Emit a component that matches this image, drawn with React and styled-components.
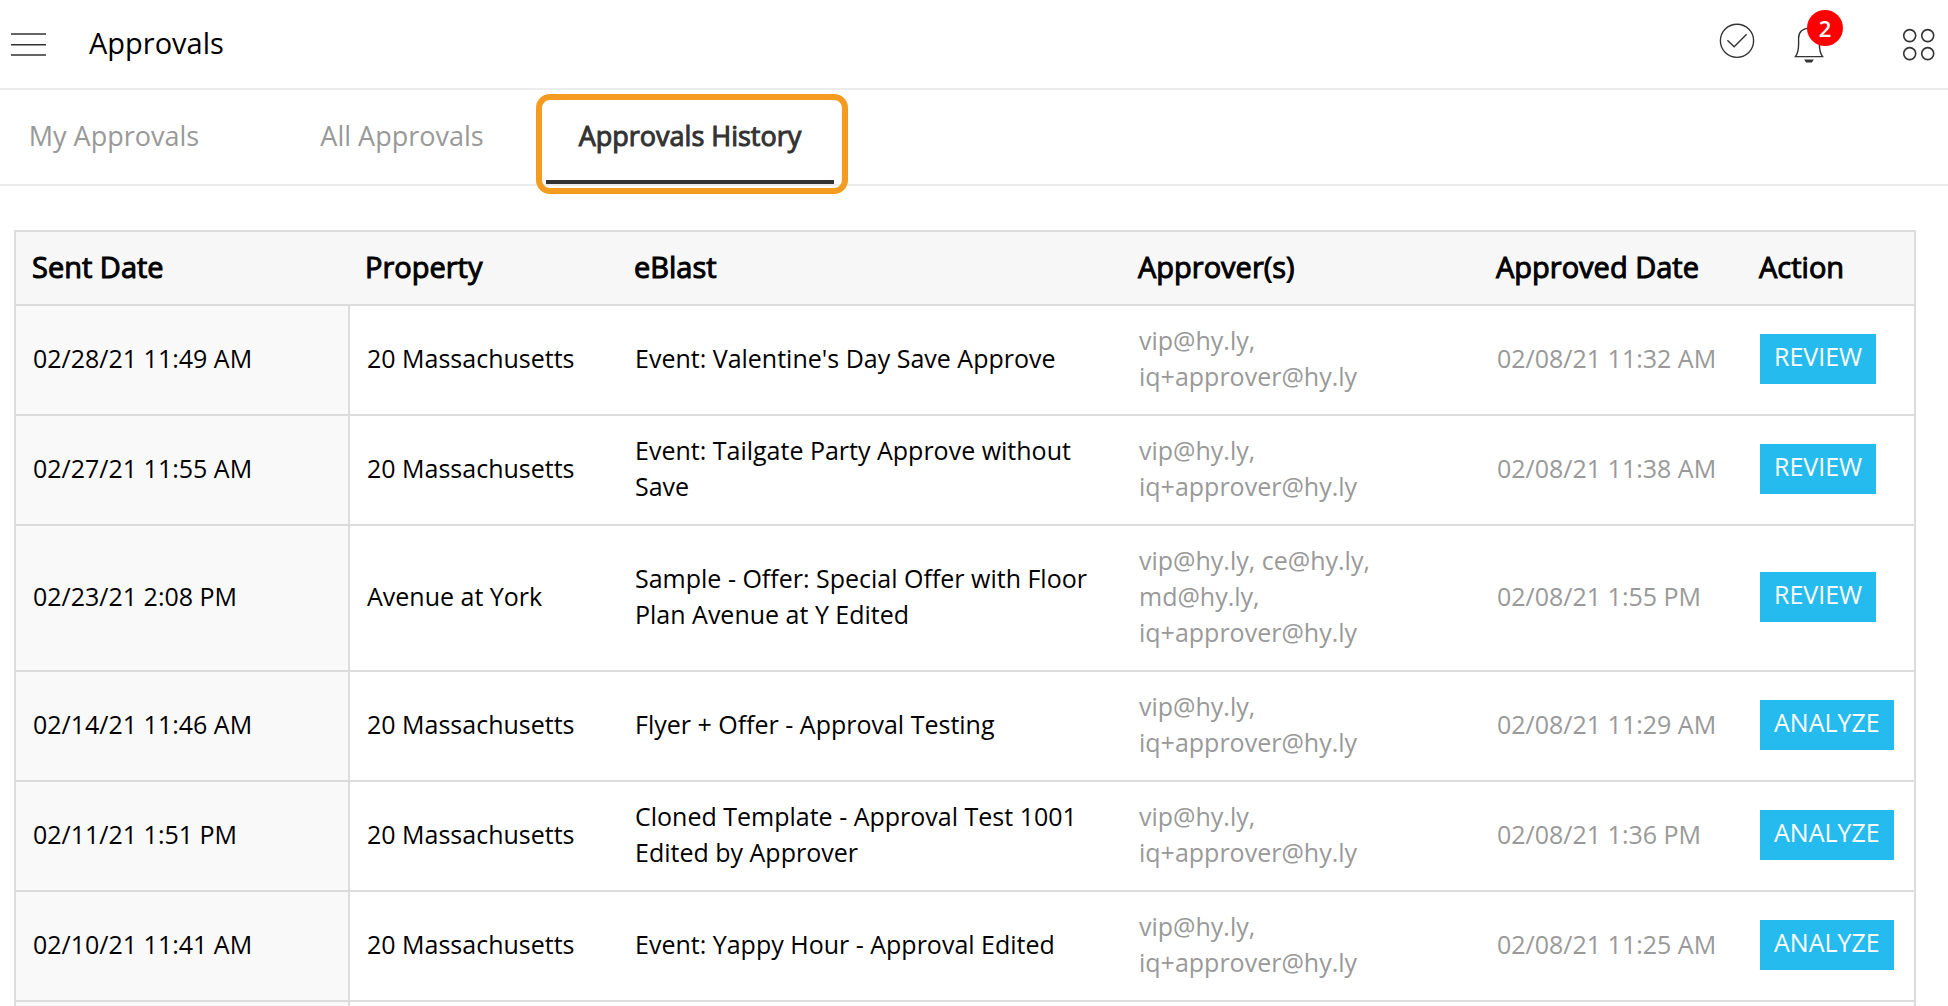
import React from "react";
import styled, { createGlobalStyle } from "styled-components";

const GlobalStyle = createGlobalStyle`
  *, *::before, *::after { box-sizing: border-box; }
  body {
    margin: 0;
    background: #fff;
    color: #000;
    font-family: "Open Sans", "Noto Sans", sans-serif;
    font-size: 25px;
    line-height: 36px;
    overflow: hidden;
  }
  button { font: inherit; color: inherit; border: 0; margin: 0; padding: 0; background: none; cursor: pointer; }
`;

const TopBar = styled.header`
  display: flex;
  align-items: center;
  height: 90px;
  padding: 0 13px 0 11px;
  border-bottom: 2px solid #ececec;
`;

const Title = styled.h1`
  margin: 0 auto 0 43px;
  padding-bottom: 2px;
  font-size: 29px;
  font-weight: 400;
`;

const IconButton = styled.button`
  position: relative;
  display: flex;
  color: #333;
  margin-left: ${(p) => p.$gap || 0}px;

  svg { display: block; fill: none; stroke: currentColor; }
`;

const Badge = styled.span`
  position: absolute;
  top: -15px;
  left: 13px;
  width: 36px;
  height: 36px;
  border-radius: 50%;
  background: #f00;
  color: #fff;
  font-size: 22px;
  font-weight: 600;
  text-align: center;
`;

const TabBar = styled.nav`
  display: flex;
  height: 96px;
  margin-left: -30px;
  border-bottom: 2px solid #ececec;
`;

const Tab = styled.button`
  position: relative;
  width: 288px;
  padding-top: 2px;
  font-size: 27px;
  color: ${(p) => (p.$active ? "#333" : "#999")};
  border-bottom: 4px solid ${(p) => (p.$active ? "#333" : "transparent")};
  -webkit-text-stroke: ${(p) => (p.$active ? "1px" : "0")};
`;

const Highlight = styled.span`
  position: absolute;
  inset: 4px -14px -14px -10px;
  border: 6px solid #f59c20;
  border-radius: 14px;
  pointer-events: none;
`;

const Content = styled.main`
  padding: 44px 32px 0 14px;
`;

const Table = styled.table`
  width: 100%;
  table-layout: fixed;
  border-collapse: collapse;
  border: 2px solid #dcdcdc;
`;

const Column = styled.col`
  width: ${(p) => (p.$width ? `${p.$width}px` : "auto")};
`;

const HeadCell = styled.th`
  height: 74px;
  padding: 0 16px 2px;
  background: #f7f7f7;
  border-bottom: 2px solid #dcdcdc;
  font-size: 29px;
  font-weight: 400;
  text-align: left;
  white-space: nowrap;
  -webkit-text-stroke: 1px;
`;

const Cell = styled.td`
  padding: 16px 16px 20px 17px;
  border-bottom: 2px solid #dcdcdc;
  color: ${(p) => (p.$muted ? "#999" : "#000")};
  white-space: ${(p) => (p.$nowrap ? "nowrap" : "normal")};
`;

const DateCell = styled(Cell)`
  background: #f9f9f9;
  border-right: 2px solid #dcdcdc;
`;

const ActionCell = styled(Cell)`
  padding: 17px 16px 19px 17px;
`;

const ActionButton = styled.button`
  display: block;
  height: 50px;
  padding: 0 14px 6px;
  background: #26bbef;
  color: #fff;
`;

const MenuIcon = () => (
  <svg width="35" height="24" viewBox="0 0 35 24" strokeWidth="1.6" aria-hidden="true">
    <path d="M0 2h35M0 12.7h35M0 23h35" />
  </svg>
);

const CheckIcon = () => (
  <svg width="36" height="42" viewBox="0 0 36 42" strokeWidth="1.4" aria-hidden="true">
    <circle cx="18" cy="17.800" r="16.600" />
    <path d="M8.400 17.200l6.800 6.600L27.600 11.200" />
  </svg>
);

const BellIcon = () => (
  <svg width="30" height="38" viewBox="0 0 30 38" strokeWidth="1.4" aria-hidden="true">
    <path d="M1.400 31.600C3.800 28.500 4.600 23.500 4.600 19V13C4.600 7 9 3.200 15 3.200s10.400 3.800 10.400 9.800v6c0 4.500.8 9.500 3.200 12.600z" />
    <path d="M11.500 35.300h7l-1 1.400h-5z" fill="currentColor" />
  </svg>
);

const GridIcon = () => (
  <svg width="33" height="34" viewBox="0 0 33 34" strokeWidth="1.6" aria-hidden="true">
    <circle cx="7.700" cy="8.600" r="6" />
    <circle cx="25.700" cy="8.600" r="6" />
    <circle cx="7.700" cy="26.600" r="6" />
    <circle cx="25.700" cy="26.600" r="6" />
  </svg>
);

const tabs = ["My Approvals", "All Approvals", "Approvals History"];

const columns = [
  { label: "Sent Date", width: 334 },
  { label: "Property", width: 269 },
  { label: "eBlast" },
  { label: "Approver(s)", width: 358 },
  { label: "Approved Date", width: 263 },
  { label: "Action", width: 172 },
];

const pair = "vip@hy.ly, iq+approver@hy.ly";

const rows = [
  { sent: "02/28/21 11:49 AM", property: "20 Massachusetts", eblast: "Event: Valentine's Day Save Approve", approvers: pair, approved: "02/08/21 11:32 AM", action: "REVIEW" },
  { sent: "02/27/21 11:55 AM", property: "20 Massachusetts", eblast: "Event: Tailgate Party Approve without Save", approvers: pair, approved: "02/08/21 11:38 AM", action: "REVIEW" },
  { sent: "02/23/21 2:08 PM", property: "Avenue at York", eblast: "Sample - Offer: Special Offer with Floor Plan Avenue at Y Edited", approvers: "vip@hy.ly, ce@hy.ly, md@hy.ly, iq+approver@hy.ly", approved: "02/08/21 1:55 PM", action: "REVIEW" },
  { sent: "02/14/21 11:46 AM", property: "20 Massachusetts", eblast: "Flyer + Offer - Approval Testing", approvers: pair, approved: "02/08/21 11:29 AM", action: "ANALYZE" },
  { sent: "02/11/21 1:51 PM", property: "20 Massachusetts", eblast: "Cloned Template - Approval Test 1001 Edited by Approver", approvers: pair, approved: "02/08/21 1:36 PM", action: "ANALYZE" },
  { sent: "02/10/21 11:41 AM", property: "20 Massachusetts", eblast: "Event: Yappy Hour - Approval Edited", approvers: pair, approved: "02/08/21 11:25 AM", action: "ANALYZE" },
];

export default function App() {
  const [active, setActive] = React.useState(2);

  return (
    <>
      <GlobalStyle />
      <TopBar>
        <IconButton aria-label="Menu"><MenuIcon /></IconButton>
        <Title>Approvals</Title>
        <IconButton aria-label="Approve"><CheckIcon /></IconButton>
        <IconButton aria-label="Notifications" $gap={39}>
          <BellIcon />
          <Badge>2</Badge>
        </IconButton>
        <IconButton aria-label="Apps" $gap={78}><GridIcon /></IconButton>
      </TopBar>
      <TabBar>
        {tabs.map((label, i) => (
          <Tab key={label} $active={i === active} onClick={() => setActive(i)}>
            {label}
            {i === active && <Highlight />}
          </Tab>
        ))}
      </TabBar>
      <Content>
        <Table>
          <colgroup>
            {columns.map((c) => <Column key={c.label} $width={c.width} />)}
          </colgroup>
          <thead>
            <tr>{columns.map((c) => <HeadCell key={c.label} scope="col">{c.label}</HeadCell>)}</tr>
          </thead>
          <tbody>
            {rows.map((r) => (
              <tr key={r.sent}>
                <DateCell $nowrap>{r.sent}</DateCell>
                <Cell $nowrap>{r.property}</Cell>
                <Cell>{r.eblast}</Cell>
                <Cell $muted>{r.approvers}</Cell>
                <Cell $muted $nowrap>{r.approved}</Cell>
                <ActionCell><ActionButton>{r.action}</ActionButton></ActionCell>
              </tr>
            ))}
            <tr>
              <DateCell />
              <Cell colSpan={5} />
            </tr>
          </tbody>
        </Table>
      </Content>
    </>
  );
}
